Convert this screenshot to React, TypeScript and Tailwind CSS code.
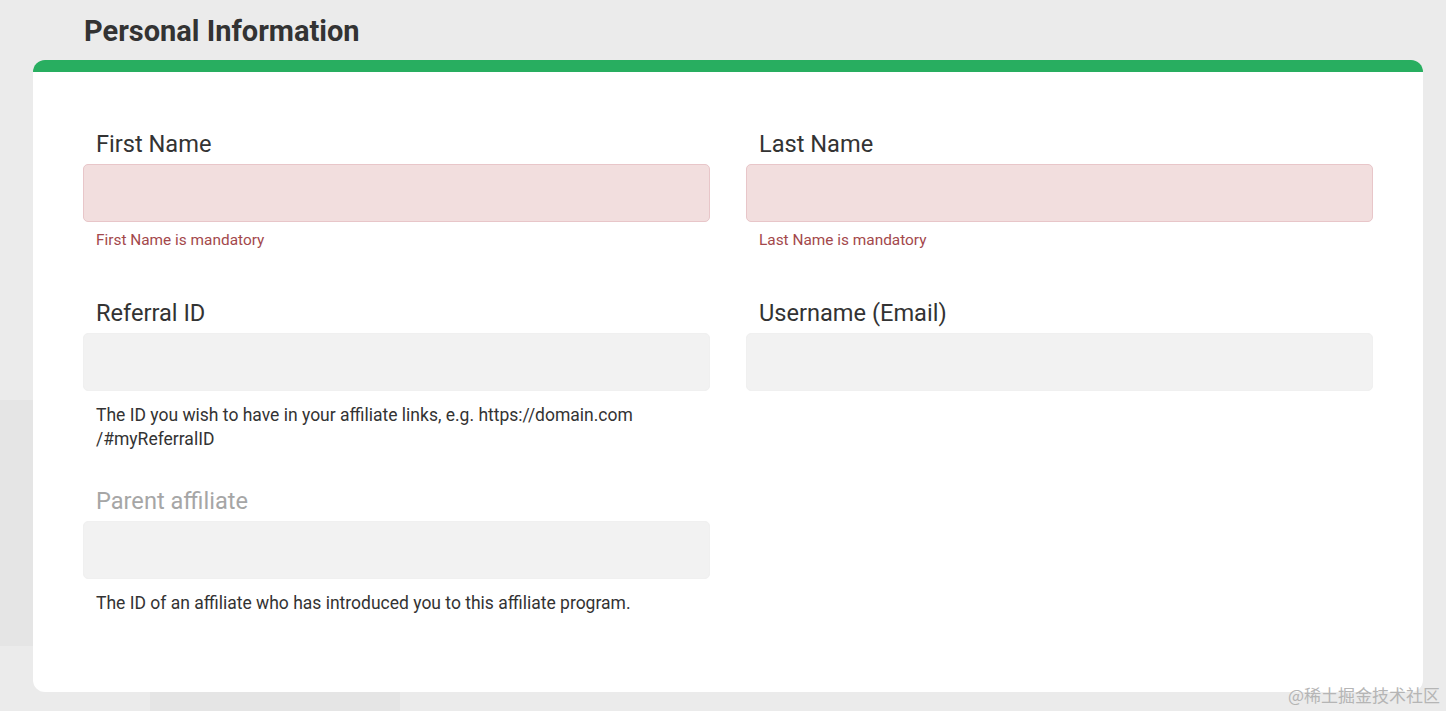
const font = { fontFamily: 'Roboto, "Noto Sans", sans-serif' }

type FieldProps = {
    label: string
    error?: string
    help?: React.ReactNode
    muted?: boolean
}

const Field = ({ label, error, help, muted }: FieldProps) => {
    return (
        <div className="flex flex-col">
            <label className={`pl-[13px] text-[23.6px] leading-[30px] ${muted ? 'text-[#a6a6a6]' : 'text-[#333333]'}`}>
                {label}
            </label>
            <div
                className={`mt-[5px] h-[58px] rounded-[5px] border ${error ? 'bg-[#f2dede] border-[#e8c6c9]' : 'bg-[#f2f2f2] border-[#f0f0f0]'}`}
            />
            {error && (
                <p className="mt-[8px] pl-[13px] text-[15.4px] leading-[20px] text-[#a3484b]">{error}</p>
            )}
            {help && (
                <p className="mt-[12px] pl-[13px] text-[17.5px] leading-[24px] text-[#333333]">{help}</p>
            )}
        </div>
    )
}

export default function App() {
    return (
        <div className="relative w-[1446px] h-[711px] overflow-hidden bg-[#ebebeb]" style={font}>
            {/* faint background shapes */}
            <div className="absolute left-0 top-[400px] w-[40px] h-[246px] bg-[#e5e5e5]" />
            <div className="absolute left-[150px] top-[692px] w-[250px] h-[19px] bg-[#e5e5e5]" />

            <div className="relative">
                {/* title */}
                <div className="h-[60px] pl-[84px] flex items-center">
                    <h2 className="text-[29px] font-bold text-[#333333] leading-none mt-[2px]">Personal Information</h2>
                </div>

                {/* card */}
                <div className="ml-[33px] w-[1390px] h-[632px] bg-white rounded-[12px] border-t-[12px] border-[#28ae60] px-[50px] pt-[57px]">
                    <div className="grid grid-cols-2 gap-x-[36px] items-start">
                        <Field label="First Name" error="First Name is mandatory" />
                        <Field label="Last Name" error="Last Name is mandatory" />

                        <div className="mt-[48px]">
                            <Field
                                label="Referral ID"
                                help={<>The ID you wish to have in your affiliate links, e.g. https://domain.com<br />/#myReferralID</>}
                            />
                        </div>
                        <div className="mt-[48px]">
                            <Field label="Username (Email)" />
                        </div>

                        <div className="mt-[35px]">
                            <Field
                                label="Parent affiliate"
                                muted
                                help="The ID of an affiliate who has introduced you to this affiliate program."
                            />
                        </div>
                        <div />
                    </div>
                </div>
            </div>

            <div
                className="absolute right-[6px] bottom-[4px] text-[17px] text-[#b5b5b5]"
                style={{ fontFamily: '"Noto Sans CJK SC", sans-serif' }}
            >
                @稀土掘金技术社区
            </div>
        </div>
    )
}
